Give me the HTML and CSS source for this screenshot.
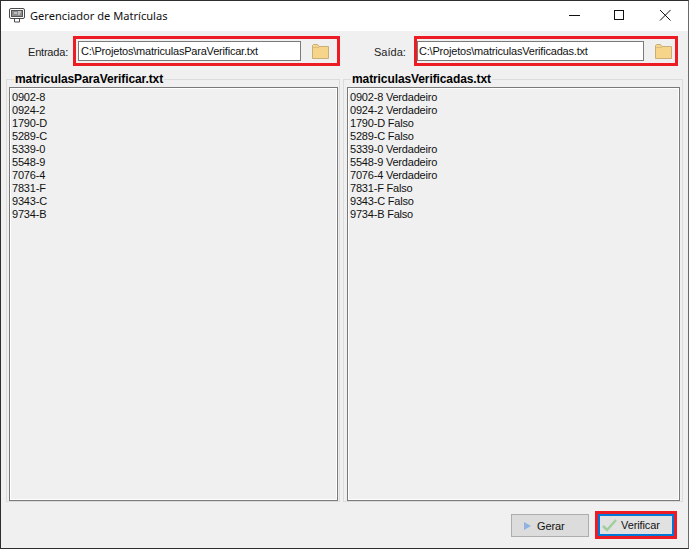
FILE: index.html
```html
<!DOCTYPE html>
<html lang="pt">
<head>
<meta charset="utf-8">
<title>Gerenciador de Matrículas</title>
<link rel="stylesheet" href="styles.css">
</head>
<body>
<div class="window">
  <header class="titlebar">
    <svg class="app-icon" width="16" height="16" viewBox="0 0 16 16">
      <rect x="0.5" y="1.5" width="15" height="10" rx="1.500" fill="#fff" stroke="#4a4a4a"/>
      <rect x="2.5" y="3.5" width="11" height="6" fill="#8d8d8d" stroke="#555"/>
      <path d="M5 6h3M9 5h3M9 7h2" stroke="#f0f0f0"/>
      <path d="M5.500 12v3h5v-3" fill="none" stroke="#4a4a4a"/>
    </svg>
    <span class="title">Gerenciador de Matrículas</span>
    <div class="controls">
      <svg width="46" height="30" viewBox="0 0 46 30"><path d="M19 15.500h11" stroke="#111"/></svg>
      <svg width="46" height="30" viewBox="0 0 46 30"><rect x="18.500" y="10.500" width="9" height="9" fill="none" stroke="#111"/></svg>
      <svg width="46" height="30" viewBox="0 0 46 30"><path d="M18 10l10.500 10.500M28.500 10l-10.500 10.500" stroke="#111" fill="none"/></svg>
    </div>
  </header>
  <main class="content">
    <div class="paths">
      <div class="path path-in">
        <label class="path-label label-in">Entrada:</label>
        <div class="red-box box-in">
          <div class="input input-in">C:\Projetos\matriculasParaVerificar.txt</div>
          <svg class="folder" width="17" height="15" viewBox="0 0 17 15">
            <path d="M.5 14.500V1.500l1-1h4l1.500 2h9.500v12z" fill="#f6d489" stroke="#c9ae78"/>
            <path d="M1 3.500h6" stroke="#d9bc80"/>
          </svg>
        </div>
      </div>
      <div class="path path-out">
        <label class="path-label label-out">Saída:</label>
        <div class="red-box box-out">
          <div class="input input-out">C:\Projetos\matriculasVerificadas.txt</div>
          <svg class="folder" width="17" height="15" viewBox="0 0 17 15">
            <path d="M.5 14.500V1.500l1-1h4l1.500 2h9.500v12z" fill="#f6d489" stroke="#c9ae78"/>
            <path d="M1 3.500h6" stroke="#d9bc80"/>
          </svg>
        </div>
      </div>
    </div>
    <div class="groups">
      <fieldset class="group group-in">
        <legend class="group-title">matriculasParaVerificar.txt</legend>
        <div class="list">0902-8
0924-2
1790-D
5289-C
5339-0
5548-9
7076-4
7831-F
9343-C
9734-B</div>
      </fieldset>
      <fieldset class="group group-out">
        <legend class="group-title">matriculasVerificadas.txt</legend>
        <div class="list">0902-8 Verdadeiro
0924-2 Verdadeiro
1790-D Falso
5289-C Falso
5339-0 Verdadeiro
5548-9 Verdadeiro
7076-4 Verdadeiro
7831-F Falso
9343-C Falso
9734-B Falso</div>
      </fieldset>
    </div>
    <div class="actions">
      <button class="btn btn-gerar" type="button">
        <svg width="7" height="8" viewBox="0 0 7 8"><path d="M0 0l7 4-7 4z" fill="#8fb2e2"/></svg>
        <span>Gerar</span>
      </button>
      <div class="btn-wrap">
        <button class="btn btn-verificar" type="button">
          <svg width="16" height="13" viewBox="0 0 16 13"><path d="M1 7l4 4 9-10" fill="none" stroke="#9fcf9f" stroke-width="2.500"/></svg>
          <span>Verificar</span>
        </button>
      </div>
    </div>
  </main>
</div>
</body>
</html>
```
FILE: styles.css
```css
* { box-sizing: border-box; }
html, body { margin: 0; padding: 0; }
body { width: 689px; height: 549px; overflow: hidden; font-family: "Liberation Sans", Arial, sans-serif; font-size: 11px; letter-spacing: -0.2px; color: #111; }
.window { width: 689px; height: 549px; border: 1px solid #2e2e2e; border-right-color: #6b6b6b; background: #f0f0f0; display: flex; flex-direction: column; }
.titlebar { height: 30px; background: #fff; display: flex; align-items: center; padding: 0 0 2px 8px; flex: none; }
.app-icon { flex: none; }
.title { margin-left: 5px; font-family: "Noto Sans", sans-serif; font-size: 11.1px; letter-spacing: 0; color: #111; }
.controls { margin-left: auto; display: flex; }
.controls svg { display: block; }
.content { flex: 1; display: flex; flex-direction: column; min-height: 0; }
.paths { display: flex; margin-top: 5px; height: 30px; flex: none; }
.path { display: flex; align-items: center; }
.path-in { width: 344px; }
.label-in { margin-left: 27px; width: 45px; padding-top: 1px; letter-spacing: -0.2px; }
.label-out { margin-left: 29px; width: 40px; padding-top: 1px; letter-spacing: 0; }
.path-label { color: #222; }
.red-box { height: 30px; border: 3px solid #ed1c24; display: flex; align-items: center; }
.box-in { width: 267px; padding-left: 2px; }
.box-out { width: 264px; padding-left: 0; }
.input { height: 20px; border: 1px solid #7a7a7a; background: #fff; line-height: 18px; padding-left: 2px; white-space: nowrap; overflow: hidden; }
.input-in { width: 223px; }
.input-out { width: 227px; padding-left: 1px; }
.folder { margin-left: 11px; flex: none; }
.groups { flex: none; display: flex; height: 430px; margin-top: 6px; padding-left: 5px; }
.group { margin: 0; padding: 5px 1px 0 2px; border: 1px solid #dcdcdc; min-width: 0; }
.group-in { width: 334px; }
.group-out { width: 340px; margin-left: 3px; padding: 5px 2px 0 3px; }
.group-title { font-weight: bold; font-size: 12px; letter-spacing: -0.1px; padding: 0 1px; margin: 0 0 -4px 5px; color: #000; line-height: 14px; }
.group-out .group-title { margin-left: 4px; }
.list { height: 414px; border: 1px solid #7a7a7a; box-shadow: inset 1px 1px 0 #fff, inset -1px -1px 0 #fff; background: #f0f0f0; white-space: pre; line-height: 13px; padding: 3px 0 0 2px; color: #111; }
.actions { flex: none; display: flex; align-items: flex-start; justify-content: flex-end; margin-top: 9px; padding-right: 11px; height: 28px; }
.btn { height: 23px; background: #e1e1e1; border: 1px solid #adadad; padding: 0; font: inherit; letter-spacing: -0.1px; color: #111; display: flex; align-items: center; }
.btn-gerar { width: 78px; margin-top: 3px; padding-left: 12px; margin-right: 6px; background: #dcdcdc; }
.btn-gerar span { margin-left: 6px; }
.btn-wrap { border: 3px solid #ed1c24; height: 28px; width: 82px; }
.btn-verificar { width: 76px; height: 22px; border: 2px solid #0078d7; padding-left: 2px; }
.btn-verificar span { margin-left: 3px; }
```
